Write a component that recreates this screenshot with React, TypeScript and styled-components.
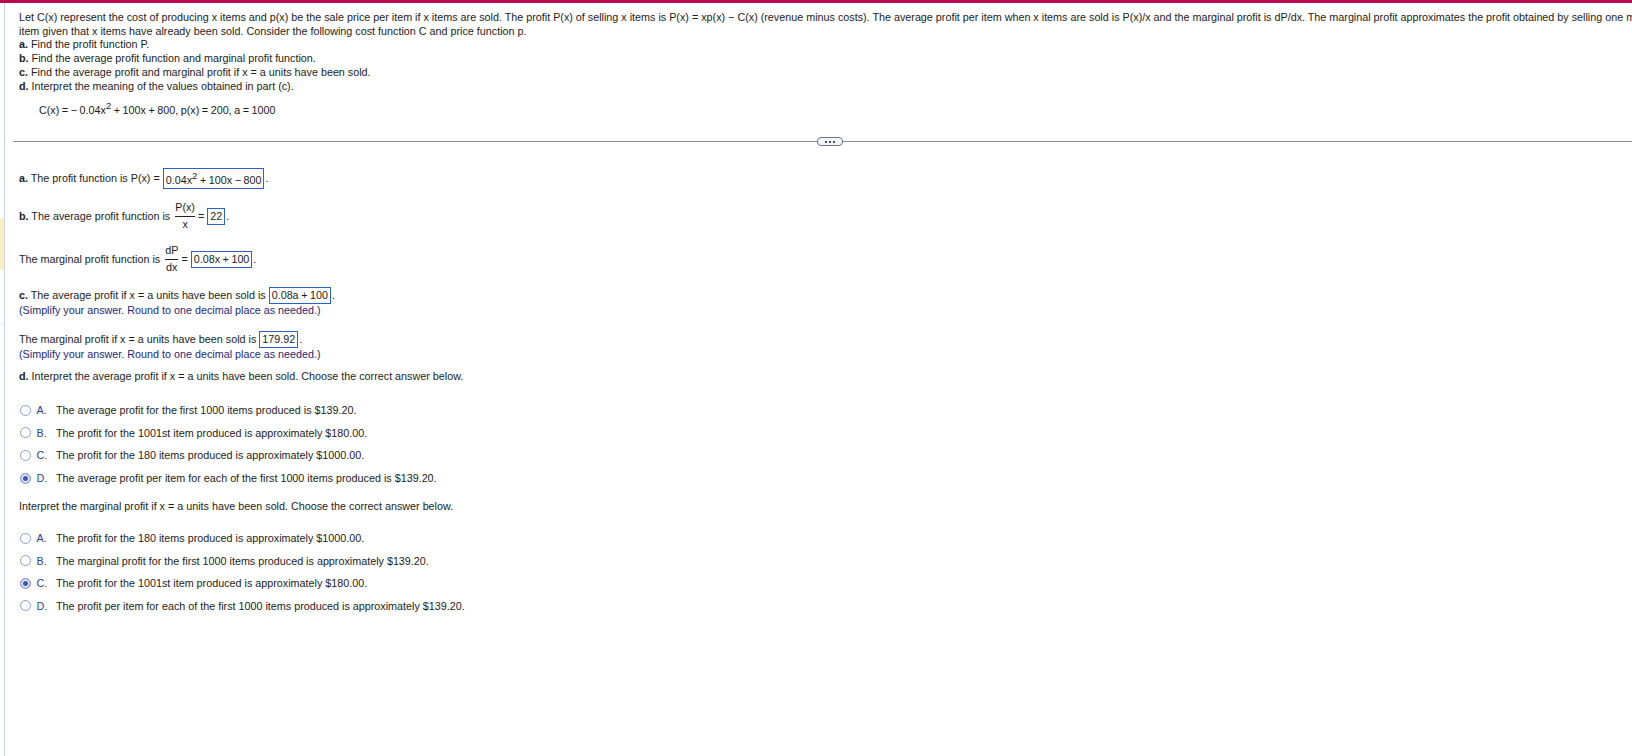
import React from 'react';
import styled, { createGlobalStyle } from 'styled-components';

const Global = createGlobalStyle`
  html, body { margin: 0; padding: 0; background: #fff; overflow: hidden; }
  body { font-family: "Liberation Sans", Arial, sans-serif; font-size: 10.78px; color: #1c1c1c; }
`;
const Page = styled.div`
  position: relative; width: 1632px; height: 756px; overflow: hidden;
  border-top: 3px solid #b80c4f; box-sizing: border-box; display: flex;
`;
const Rail = styled.div`
  width: 5px; flex: none; border-right: 1px solid #ccd2e6; box-sizing: border-box; padding-top: 215px;
`;
const RailMark = styled.div`
  width: 4px; height: 52px; background: #fbeec4;
`;
const RailTick = styled.div`
  width: 4px; height: 1px; margin-top: 54px; background: #eeeeee;
`;
const Main = styled.main`
  flex: 1; min-width: 0; padding: 8px 0 0 14px; overflow: hidden;
`;
const Statement = styled.div`line-height: 13.7px; white-space: nowrap;`;
const Part = styled.b`font-weight: 700;`;
const Formula = styled.div`margin: 9px 0 0 20px; line-height: 16px; height: 16px; white-space: nowrap; word-spacing: -0.45px;`;
const Divider = styled.div`
  height: 1px; background: #868c98; margin: 23px 0 0 -6px; position: relative;
`;
const Expander = styled.span`
  position: absolute; left: 804px; top: -4px; width: 26px; height: 9px; box-sizing: border-box;
  border: 1px solid #6c7688; border-radius: 4px; background: #f2f4f8;
  display: flex; align-items: center; justify-content: center; gap: 2px;
`;
const Dot = styled.i`width: 2px; height: 2px; background: #46506a; display: block;`;
const Answer = styled.div<{ $top: number }>`
  margin-top: ${p => p.$top}px; display: flex; align-items: center; white-space: nowrap; line-height: 13px;
`;
const Hint = styled.div`color: #1f1f7a; line-height: 14px; margin-top: -1px;`;
const Box = styled.span<{ $tall?: boolean }>`
  display: inline-block; box-sizing: border-box; border: 1px solid #2a62c8; padding: 0 2px;
  height: ${p => p.$tall ? 21 : 17}px; line-height: ${p => p.$tall ? 23 : 15}px; margin: 0 1px 0 3px;
  word-spacing: -0.45px;
`;
const Frac = styled.span`
  display: inline-flex; flex-direction: column; align-items: center; margin: 0 3px 0 5px; line-height: 13px;
`;
const Num = styled.span`padding: 0 0 2px; border-bottom: 1px solid #222;`;
const Den = styled.span`line-height: 14px;`;
const Sup = styled.sup`font-size: 9.5px; line-height: 0;`;
const Heading = styled.div<{ $top: number }>`margin-top: ${p => p.$top}px; line-height: 14px;`;
const Options = styled.div<{ $top: number }>`margin-top: ${p => p.$top}px; display: flex; flex-direction: column; gap: 8.6px;`;
const Option = styled.div`display: flex; align-items: center; line-height: 14px; height: 14px; white-space: nowrap;`;
const Radio = styled.span<{ $on?: boolean }>`
  width: 11px; height: 11px; flex: none; box-sizing: border-box; border-radius: 50%; border: 1px solid #8a9cdc; margin-left: 1px;
  background: ${p => p.$on ? '#3a57b4' : '#fff'};
  box-shadow: ${p => p.$on ? 'inset 0 0 0 2px #dfe4f6' : 'none'};
`;
const Letter = styled.span`color: #2c3f92; width: 19.5px; margin-left: 5.5px; flex: none;`;

const optsA: [string, string, boolean?][] = [
  ['A.', 'The average profit for the first 1000 items produced is $139.20.'],
  ['B.', 'The profit for the 1001st item produced is approximately $180.00.'],
  ['C.', 'The profit for the 180 items produced is approximately $1000.00.'],
  ['D.', 'The average profit per item for each of the first 1000 items produced is $139.20.', true],
];
const optsB: [string, string, boolean?][] = [
  ['A.', 'The profit for the 180 items produced is approximately $1000.00.'],
  ['B.', 'The marginal profit for the first 1000 items produced is approximately $139.20.'],
  ['C.', 'The profit for the 1001st item produced is approximately $180.00.', true],
  ['D.', 'The profit per item for each of the first 1000 items produced is approximately $139.20.'],
];
const OptionList = ({ items, top }: { items: [string, string, boolean?][]; top: number }) => (
  <Options $top={top}>
    {items.map(([l, t, on]) => (
      <Option key={l}><Radio $on={on} /><Letter>{l}</Letter><span>{t}</span></Option>
    ))}
  </Options>
);

export default function App() {
  return (
    <Page>
      <Global />
      <Rail><RailMark /><RailTick /></Rail>
      <Main>
        <Statement>
          <div>Let C(x) represent the cost of producing x items and p(x) be the sale price per item if x items are sold. The profit P(x) of selling x items is P(x) = xp(x) − C(x) (revenue minus costs). The average profit per item when x items are sold is P(x)/x and the marginal profit is dP/dx. The marginal profit approximates the profit obtained by selling one more</div>
          <div>item given that x items have already been sold. Consider the following cost function C and price function p.</div>
          <div><Part>a.</Part> Find the profit function P.</div>
          <div><Part>b.</Part> Find the average profit function and marginal profit function.</div>
          <div><Part>c.</Part> Find the average profit and marginal profit if x = a units have been sold.</div>
          <div><Part>d.</Part> Interpret the meaning of the values obtained in part (c).</div>
        </Statement>
        <Formula>C(x) = − 0.04x<Sup>2</Sup> + 100x + 800, p(x) = 200, a = 1000</Formula>
        <Divider><Expander><Dot /><Dot /><Dot /></Expander></Divider>
        <Answer $top={26}><span><Part>a.</Part> The profit function is P(x) =</span><Box $tall>0.04x<Sup>2</Sup> + 100x − 800</Box>.</Answer>
        <Answer $top={12}><span><Part>b.</Part> The average profit function is</span><Frac><Num>P(x)</Num><Den>x</Den></Frac>=<Box>22</Box>.</Answer>
        <Answer $top={13}>The marginal profit function is<Frac><Num>dP</Num><Den>dx</Den></Frac>=<Box>0.08x + 100</Box>.</Answer>
        <Answer $top={13}><span><Part>c.</Part> The average profit if x = a units have been sold is</span><Box>0.08a + 100</Box>.</Answer>
        <Hint>(Simplify your answer. Round to one decimal place as needed.)</Hint>
        <Answer $top={14}>The marginal profit if x = a units have been sold is<Box>179.92</Box>.</Answer>
        <Hint>(Simplify your answer. Round to one decimal place as needed.)</Hint>
        <Heading $top={8}><Part>d.</Part> Interpret the average profit if x = a units have been sold. Choose the correct answer below.</Heading>
        <OptionList items={optsA} top={20} />
        <Heading $top={14}>Interpret the marginal profit if x = a units have been sold. Choose the correct answer below.</Heading>
        <OptionList items={optsB} top={18} />
      </Main>
    </Page>
  );
}
